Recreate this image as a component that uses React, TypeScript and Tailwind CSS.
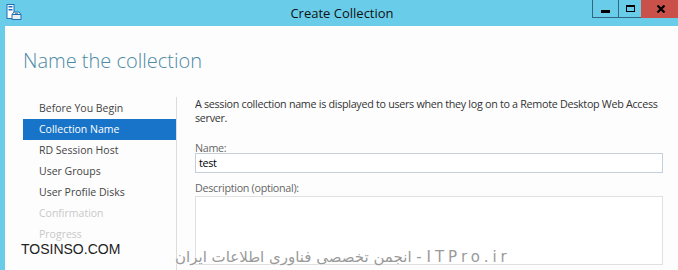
import React from "react"

const steps = [
  { label: "Before You Begin", state: "done" },
  { label: "Collection Name", state: "active" },
  { label: "RD Session Host", state: "done" },
  { label: "User Groups", state: "done" },
  { label: "User Profile Disks", state: "done" },
  { label: "Confirmation", state: "off" },
  { label: "Progress", state: "off" },
]

function WizardIcon() {
  return (
    <svg width="16" height="16" viewBox="0 0 16 16">
      <rect x="1" y="0.5" width="7" height="14" fill="#ffffff" stroke="#1f6fb5" />
      <rect x="2.5" y="2" width="4" height="1.5" fill="#1f6fb5" />
      <rect x="2.5" y="5" width="4" height="1.5" fill="#1f6fb5" />
      <path d="M6 10.5 L8 8 H13 L15 10.5 V15.5 H6 Z" fill="#e9eef2" stroke="#1f6fb5" />
      <path d="M6 10.5 H15" stroke="#1f6fb5" />
      <rect x="9" y="9" width="3" height="1" fill="#7a8b99" />
    </svg>
  )
}

export default function App() {
  return (
    <div className="relative w-[678px] h-[270px] overflow-hidden bg-[#69cdea] flex flex-col" style={{ fontFamily: '"Open Sans", sans-serif' }}>
      {/* title bar */}
      <div className="h-[26px] shrink-0 flex items-start relative">
        <div className="pl-[6px] pt-[4px]">
          <WizardIcon />
        </div>
        <div className="flex-1 pl-[70px] text-center text-[13px] leading-[26px] text-[#111]">Create Collection</div>
        <div className="flex h-[18px]">
          <button className="w-[26px] h-[18px] border-l border-b border-[#2f6880] flex items-center justify-center">
            <span className="block w-[9px] h-[3px] bg-black mt-[6px]" />
          </button>
          <button className="w-[23px] h-[18px] border-l border-b border-[#2f6880] flex items-center justify-center">
            <span className="block w-[9px] h-[7px] border-[1.5px] border-t-[2.5px] border-black" />
          </button>
          <button className="w-[37px] h-[18px] bg-[#c9514a] flex items-center pl-[15px]">
            <svg width="10" height="8" viewBox="0 0 10 8">
              <path d="M1.5 0.5 L8.5 7.5 M8.5 0.5 L1.5 7.5" stroke="#000" strokeWidth="2.2" />
            </svg>
          </button>
        </div>
      </div>

      {/* window body */}
      <div className="flex-1 ml-[5px] bg-[#fdfdfd] flex flex-col">
        <h1 className="mt-[19px] pl-[18px] text-[20px] leading-[32px] font-light text-[#4d8aa4]">Name the collection</h1>

        <div className="mt-[20px] flex flex-1">
          <ul className="w-[171px] shrink-0 pl-[18px] pt-[1px] text-[10.5px]">
            {steps.map((s) => (
              <li
                key={s.label}
                className={
                  s.state === "active"
                    ? "h-[21px] leading-[21px] pl-[16px] bg-[#1874c8] text-white"
                    : s.state === "off"
                    ? "h-[21px] leading-[21px] pl-[16px] text-[#c8c8c8]"
                    : "h-[21px] leading-[21px] pl-[16px] text-[#444]"
                }
              >
                {s.label}
              </li>
            ))}
          </ul>

          <div className="flex-1 min-w-0 border-l border-[#dcdcdc] pl-[18px] text-[10.75px] tracking-[-0.3px] text-[#333]">
            <p className="leading-[14px] whitespace-nowrap">
              A session collection name is displayed to users when they log on to a Remote Desktop Web Access
              <br />
              server.
            </p>
            <label className="block mt-[17px] leading-[12px] text-[#666]">Name:</label>
            <div className="mt-[-1px] h-[20px] w-[468px] border border-[#c3d0da] bg-white pl-[3px] leading-[18px] text-black">test</div>
            <label className="block mt-[9px] leading-[12px] text-[#666]">Description (optional):</label>
            <div className="mt-[2px] h-[69px] w-[468px] border border-[#e0e0e0] bg-white" />
          </div>
        </div>
      </div>

      {/* video watermarks */}
      <div
        className="absolute left-[21px] top-[241px] text-[14px] leading-[16px] text-[#222]"
        style={{ fontFamily: '"Liberation Sans", Arial, sans-serif', textShadow: "0 0 2px #fff, 0 0 2px #fff" }}
      >
        TOSINSO.COM
      </div>
      <div
        className="absolute left-[175px] top-[247px] text-[15px] leading-[20px] text-[#9a9a9a] whitespace-nowrap"
        style={{ fontFamily: '"DejaVu Sans", "Liberation Sans", sans-serif', textShadow: "0 0 2px #fff, 0 0 2px #fff" }}
      >
        انجمن تخصصی فناوری اطلاعات ایران -{" "}
        <span className="tracking-[4px]">ITPro.ir</span>
      </div>
    </div>
  )
}
